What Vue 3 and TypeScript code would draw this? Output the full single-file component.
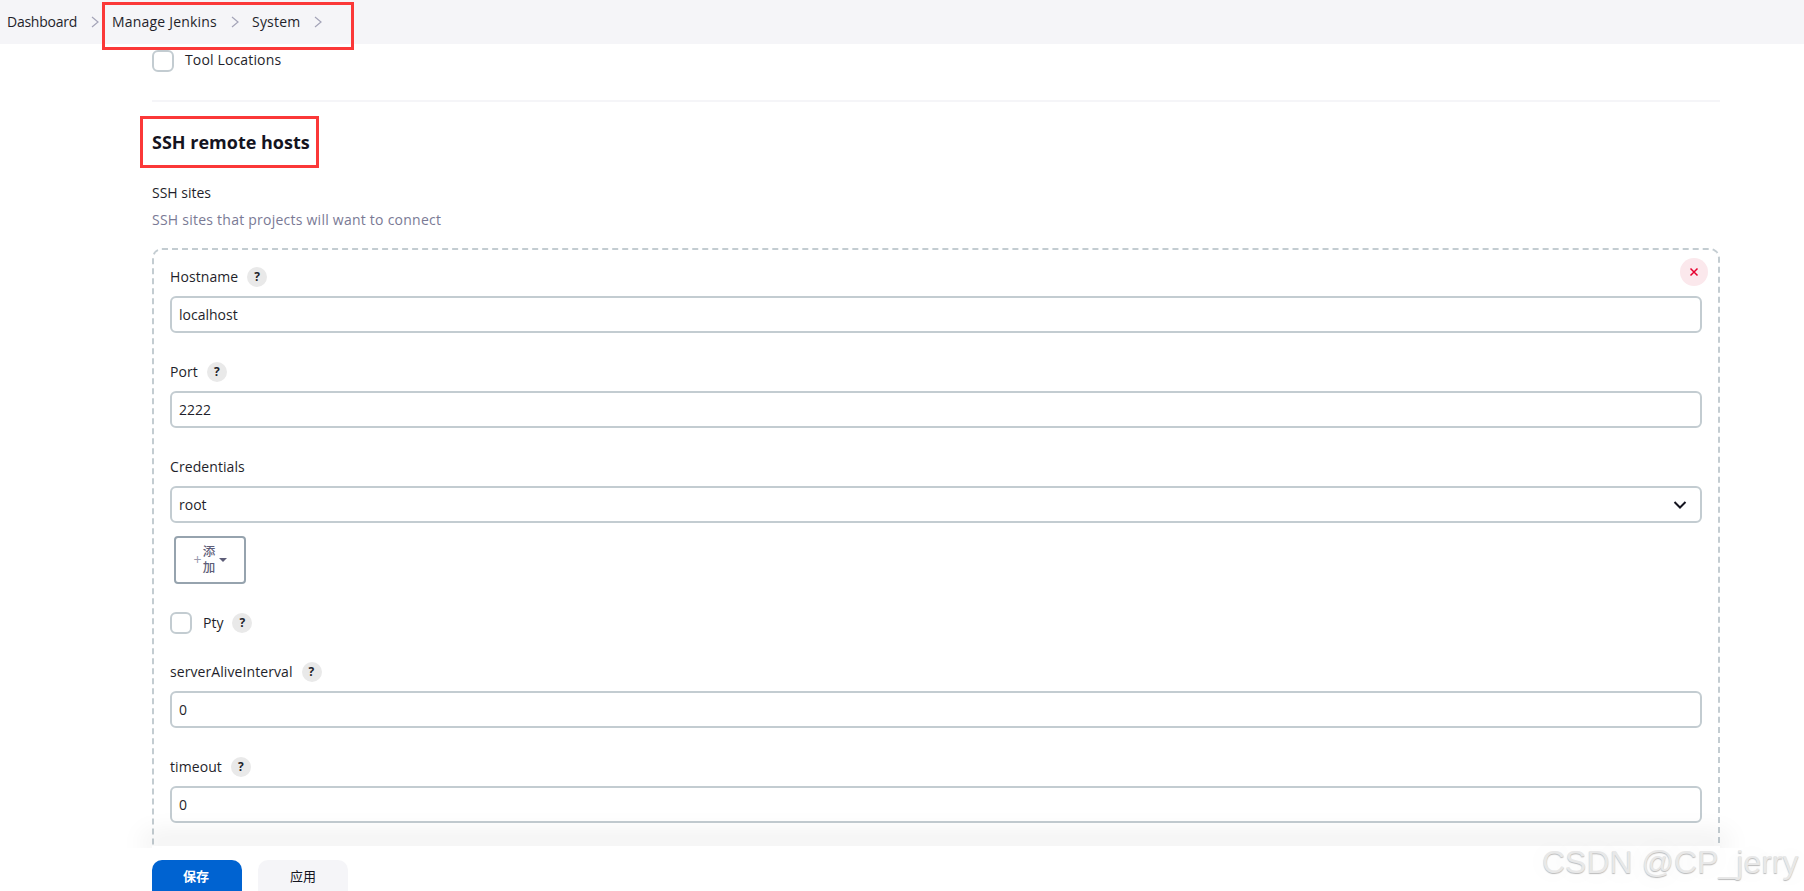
<template>
  <div class="page">
    <nav class="crumbs">
      <template v-for="c in crumbs" :key="c">
        <span class="crumb">{{ c }}</span>
        <svg class="chev" viewBox="0 0 10 14" width="10" height="14"><path d="M2 2l6 5-6 5" /></svg>
      </template>
    </nav>

    <main class="content">
      <label class="check-row top-check">
        <span class="checkbox"></span>
        <span class="check-text">Tool Locations</span>
      </label>
      <div class="divider"></div>
      <h2 class="section-title">SSH remote hosts</h2>
      <div class="sites-label">SSH sites</div>
      <div class="sites-desc">SSH sites that projects will want to connect</div>

      <section class="repeat">
        <button class="close" type="button" aria-label="delete">
          <svg viewBox="0 0 10 10" width="10" height="10"><path d="M1.5 1.5l7 7M8.5 1.5l-7 7" /></svg>
        </button>

        <div v-for="f in topFields" :key="f.label" class="field">
          <div class="label">{{ f.label }}<span class="help">?</span></div>
          <div class="input">{{ f.value }}</div>
        </div>

        <div class="field creds">
          <div class="label">Credentials</div>
          <div class="input select">
            root
            <svg viewBox="0 0 14 10" width="14" height="10"><path d="M1.5 2l5.5 5.5L12.5 2" /></svg>
          </div>
        </div>
        <button class="add" type="button">
          <span class="plus">+</span>
          <span class="add-text">添加</span>
          <span class="caret"></span>
        </button>

        <label class="check-row pty">
          <span class="checkbox"></span>
          <span>Pty</span><span class="help">?</span>
        </label>

        <div v-for="f in bottomFields" :key="f.label" class="field">
          <div class="label">{{ f.label }}<span class="help">?</span></div>
          <div class="input">{{ f.value }}</div>
        </div>
      </section>
    </main>

    <footer class="actions">
      <button class="btn primary" type="button">保存</button>
      <button class="btn" type="button">应用</button>
    </footer>

    <div class="mark mark-crumbs"></div>
    <div class="mark mark-title"></div>
    <div class="watermark">CSDN @CP_jerry</div>
  </div>
</template>

<script setup lang="ts">
const crumbs: string[] = ['Dashboard', 'Manage Jenkins', 'System']

const topFields = [
  { label: 'Hostname', value: 'localhost' },
  { label: 'Port', value: '2222' }
]
const bottomFields = [
  { label: 'serverAliveInterval', value: '0' },
  { label: 'timeout', value: '0' }
]
</script>

<style>
html, body { margin: 0; overflow: hidden; background: #fff; }
</style>

<style scoped>
.page {
  position: relative;
  height: 891px;
  overflow: hidden;
  background: #fff;
  color: #1f1f2b;
  font: 14px/20px "Open Sans", "Noto Sans CJK SC", sans-serif;
}

.crumbs {
  height: 44px;
  display: flex;
  align-items: center;
  padding-left: 7px;
  background: #f5f5f8;
}
.crumb { margin-right: 13px; letter-spacing: 0.2px; }
.crumb:first-child { letter-spacing: -0.25px; }
.chev { margin-right: 12px; }
.chev path { fill: none; stroke: #a4a4b8; stroke-width: 1.2; }

.content { padding: 6px 84px 0 152px; }

.check-row { display: flex; align-items: center; }
.checkbox {
  width: 22px;
  height: 22px;
  box-sizing: border-box;
  border: 2px solid #c3ccd1;
  border-radius: 6px;
  margin-right: 11px;
}
.top-check { height: 22px; }
.check-text { margin-top: -2px; letter-spacing: 0.15px; }

.divider { height: 2px; margin-top: 28px; background: #f5f5f8; }

.section-title {
  margin: 28px 0 0;
  font-size: 18px;
  line-height: 24px;
  font-weight: 700;
  color: #14141f;
}
.sites-label { margin-top: 29px; }
.sites-desc { margin-top: 7px; color: #7a7a95; letter-spacing: 0.24px; }

.repeat {
  position: relative;
  height: 640px;
  margin-top: 18px;
  padding: 17px 16px 0;
  border: 2px dashed #c3ccd1;
  border-radius: 10px;
  box-sizing: border-box;
}
.close {
  position: absolute;
  top: 8px;
  right: 10px;
  width: 28px;
  height: 28px;
  padding: 0;
  border: 0;
  border-radius: 50%;
  background: #fbe8ec;
  display: flex;
  align-items: center;
  justify-content: center;
}
.close path { fill: none; stroke: #e6002e; stroke-width: 1.5; }

.field { margin-bottom: 29px; }
.field.creds { margin-bottom: 13px; }
.label { display: flex; align-items: center; height: 20px; margin-bottom: 9px; letter-spacing: 0.08px; }
.help {
  width: 20px;
  height: 20px;
  margin-left: 9px;
  border-radius: 50%;
  background: #e9e9e9;
  font-size: 12px;
  font-weight: 700;
  text-align: center;
  line-height: 20px;
}
.input {
  height: 37px;
  box-sizing: border-box;
  border: 2px solid #c3ccd1;
  border-radius: 6px;
  padding: 0 8px 0 7px;
  display: flex;
  align-items: center;
  justify-content: space-between;
  background: #fff;
}
.select svg { margin-right: 5px; }
.select path { fill: none; stroke: #14141f; stroke-width: 2; }

.add {
  width: 72px;
  height: 48px;
  margin-left: 4px;
  padding: 0;
  border: 2px solid #96a3ae;
  border-radius: 4px;
  background: #fff;
  color: #5d5d78;
  display: flex;
  align-items: center;
  justify-content: center;
  font: inherit;
}
.plus { font-size: 14px; color: #9a9aae; margin-right: 1px; }
.add-text { width: 13px; font-size: 12.5px; line-height: 16px; font-weight: 500; }
.caret {
  margin-left: 3px;
  border-left: 4px solid transparent;
  border-right: 4px solid transparent;
  border-top: 4px solid #5d5d78;
}

.pty { margin: 28px 0 28px; height: 22px; }

.actions {
  position: absolute;
  left: 0;
  right: 0;
  bottom: 0;
  height: 45px;
  padding: 14px 0 0 152px;
  box-sizing: border-box;
  display: flex;
  gap: 16px;
  background: #fff;
}
.actions::before {
  content: "";
  position: absolute;
  left: 152px;
  right: 84px;
  top: 0;
  height: 2px;
  box-shadow: 0 -4px 26px 8px rgba(20, 20, 31, 0.08);
  clip-path: inset(-60px -60px 0 -60px);
}
.btn {
  width: 90px;
  height: 44px;
  border: 0;
  border-radius: 10px;
  background: #f5f5f8;
  color: #14141f;
  font: 13px/20px "Noto Sans CJK SC", sans-serif;
  padding: 0 0 12px;
}
.btn.primary { background: #0063d1; color: #fff; font-weight: 700; padding-right: 2px; }

.mark { position: absolute; border: 3px solid #fb3838; box-sizing: border-box; }
.mark-crumbs { left: 102px; top: 2px; width: 252px; height: 48px; }
.mark-title { left: 140px; top: 116px; width: 179px; height: 52px; }

.watermark {
  position: absolute;
  left: 1542px;
  top: 840px;
  font: 32px/44px "Liberation Sans", sans-serif;
  color: #e8e8e8;
  text-shadow: 0 1px 1px #bbb, 0 0 24px rgba(0, 0, 0, 0.08);
  white-space: nowrap;
}
</style>
